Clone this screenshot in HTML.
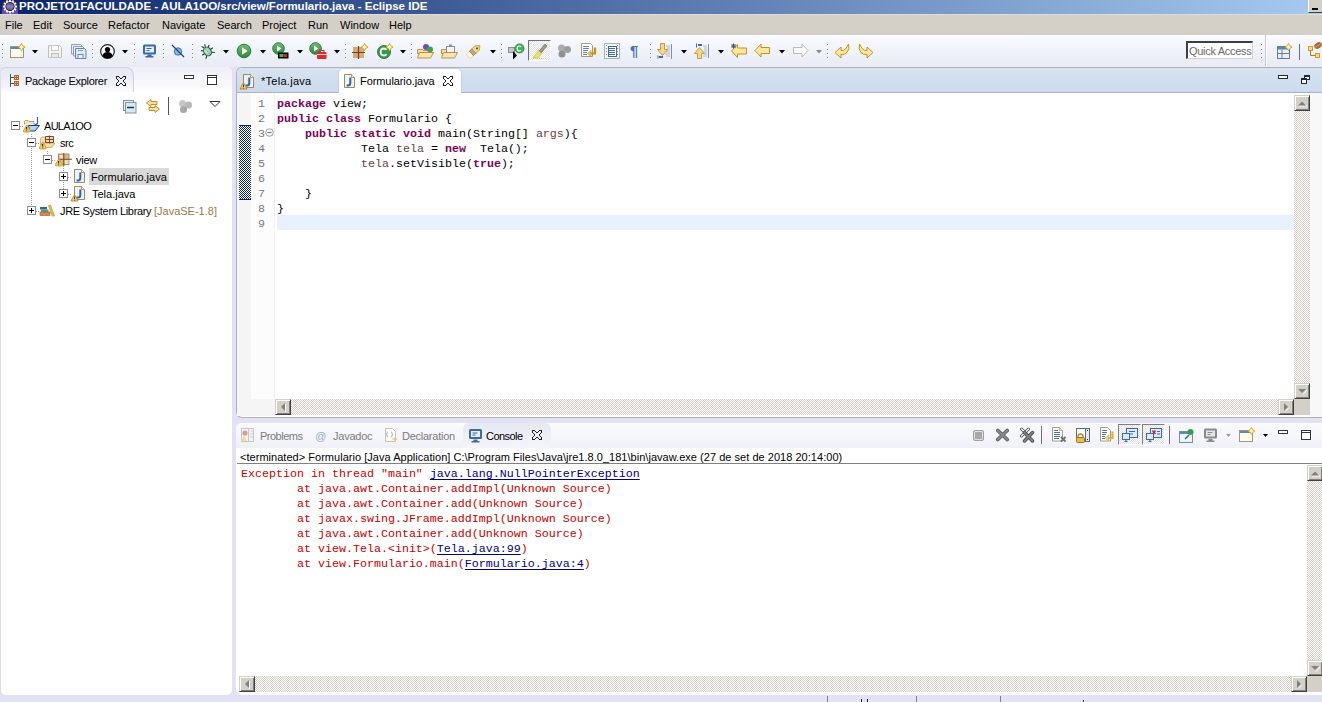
<!DOCTYPE html>
<html><head><meta charset="utf-8">
<style>
*{margin:0;padding:0;box-sizing:border-box}
html,body{width:1322px;height:702px;overflow:hidden;background:#e2e2f4;font-family:"Liberation Sans",sans-serif;font-size:11px;color:#000}
.a{position:absolute;white-space:pre}
#title{left:0;top:0;width:1322px;height:14px;background:linear-gradient(to right,#0a246a 0%,#a6caf0 100%)}
#title .t{left:19px;top:-1px;color:#fff;font-weight:bold;font-size:11.5px;line-height:15px}
#menu{left:0;top:14px;width:1322px;height:21px;background:#d4d0c8;border-top:1px solid #e0ded8}
#menu span{position:absolute;top:4px;line-height:13px}
#tb{left:0;top:35px;width:1322px;height:32px;background:linear-gradient(#fcfcff,#f0f4fa 45%,#e8eaf5)}
.mono{font-family:"Liberation Mono",monospace;font-size:12px;letter-spacing:-0.2px}
#pe{left:0;top:67px;width:232px;height:628px;background:#fff;border-radius:6px 6px 5px 5px;border-left:1px solid #dcdce6}
#pehead{left:0;top:67px;width:232px;height:25px;background:linear-gradient(#efeff8,#f8f8fc 70%,#fff);border-radius:6px 6px 0 0}
#ed{left:236px;top:67px;width:1086px;height:351px;background:#fff;border:1px solid #b0b0b8;border-right:none;border-radius:6px 0 0 6px}
#edhead{left:237px;top:68px;width:1085px;height:25px;background:linear-gradient(#d8e3f1,#ccdaec);border-bottom:1px solid #a8b4c4;border-radius:5px 0 0 0}
#con{left:236px;top:423px;width:1086px;height:272px;background:#fff;border-radius:6px 0 0 6px}
#conhead{left:236px;top:423px;width:1086px;height:25px;background:linear-gradient(#fbfbfe,#f0f0f8);border-radius:6px 0 0 0}
#status{left:0;top:695px;width:1322px;height:7px;background:#e2e2f4}
.code{font-family:"Liberation Mono",monospace;font-size:11.67px;letter-spacing:0;line-height:15px}
.kw{color:#7f0055;font-weight:bold}
.ln{color:#787878}
.red{color:#c80000}
.lnk{color:#000080;text-decoration:underline;text-underline-offset:2px}
.exp{width:9px;height:9px;border:1px solid #8c8c8c;background:#fff}
.exp:after{content:"";position:absolute;left:1px;top:3px;width:5px;height:1px;background:#000}
.plus:before{content:"";position:absolute;left:3px;top:1px;width:1px;height:5px;background:#000}
.var{color:#6a3e3e}
.chk{background-color:#fff;background-image:linear-gradient(45deg,#0a246a 25%,transparent 25%,transparent 75%,#0a246a 75%),linear-gradient(45deg,#0a246a 25%,transparent 25%,transparent 75%,#0a246a 75%);background-size:2px 2px;background-position:0 0,1px 1px}
.btn{width:16px;height:16px;background:#d4d0c8;border-top:1px solid #d4d0c8;border-left:1px solid #d4d0c8;border-right:1px solid #404040;border-bottom:1px solid #404040;box-shadow:inset 1px 1px 0 #fff,inset -1px -1px 0 #808080}
.btn svg{position:absolute;left:0;top:0}
.pressed{border-left:1px solid #808080;border-top:1px solid #808080;border-right:1px solid #fff;border-bottom:1px solid #fff;background-color:#fff;background-image:linear-gradient(45deg,#e0e0e8 25%,transparent 25%,transparent 75%,#e0e0e8 75%),linear-gradient(45deg,#e0e0e8 25%,transparent 25%,transparent 75%,#e0e0e8 75%);background-size:2px 2px;background-position:0 0,1px 1px}
.grip{width:1px;height:1px;background:#909090;box-shadow:0 5px 0 #909090,0 9px 0 #909090,0 14px 0 #909090}
.hatch{background-color:#fff;background-image:linear-gradient(45deg,#d4d0c8 25%,transparent 25%,transparent 75%,#d4d0c8 75%),linear-gradient(45deg,#d4d0c8 25%,transparent 25%,transparent 75%,#d4d0c8 75%);background-size:2px 2px;background-position:0 0,1px 1px}
</style></head><body>
<div id="title" class="a">
    <div class="a t">PROJETO1FACULDADE - AULA1OO/src/view/Formulario.java - Eclipse IDE</div>
</div>
<div id="menu" class="a">
  <span style="left:5px">File</span><span style="left:33px">Edit</span><span style="left:63px">Source</span><span style="left:108px">Refactor</span><span style="left:162px">Navigate</span><span style="left:217px">Search</span><span style="left:262px">Project</span><span style="left:308px">Run</span><span style="left:340px">Window</span><span style="left:389px">Help</span>
</div>
<div id="tb" class="a"></div>
<!--TB-->
<svg class="a" style="left:2px;top:0px" width="16" height="14" viewBox="0 0 16 14"><defs><linearGradient id="tg" x1="0" y1="0" x2="0" y2="1"><stop offset="0" stop-color="#1a1a60"/><stop offset="1" stop-color="#7050b8"/></linearGradient><linearGradient id="tc" x1="0" y1="0" x2="0" y2="1"><stop offset="0" stop-color="#5a5080"/><stop offset="0.5" stop-color="#8a80c0"/><stop offset="1" stop-color="#5a5088"/></linearGradient></defs><rect width="16" height="14" fill="url(#tg)"/><g transform="translate(0 0.5)"><circle cx="8" cy="6" r="5.6" fill="#fff"/><rect x="7.1" y="-1" width="1.8" height="3" transform="rotate(0 8 6)" fill="#fff"/><rect x="7.1" y="-1" width="1.8" height="3" transform="rotate(30 8 6)" fill="#fff"/><rect x="7.1" y="-1" width="1.8" height="3" transform="rotate(60 8 6)" fill="#fff"/><rect x="7.1" y="-1" width="1.8" height="3" transform="rotate(90 8 6)" fill="#fff"/><rect x="7.1" y="-1" width="1.8" height="3" transform="rotate(120 8 6)" fill="#fff"/><rect x="7.1" y="-1" width="1.8" height="3" transform="rotate(150 8 6)" fill="#fff"/><rect x="7.1" y="-1" width="1.8" height="3" transform="rotate(180 8 6)" fill="#fff"/><rect x="7.1" y="-1" width="1.8" height="3" transform="rotate(210 8 6)" fill="#fff"/><rect x="7.1" y="-1" width="1.8" height="3" transform="rotate(240 8 6)" fill="#fff"/><rect x="7.1" y="-1" width="1.8" height="3" transform="rotate(270 8 6)" fill="#fff"/><rect x="7.1" y="-1" width="1.8" height="3" transform="rotate(300 8 6)" fill="#fff"/><rect x="7.1" y="-1" width="1.8" height="3" transform="rotate(330 8 6)" fill="#fff"/><circle cx="8" cy="6" r="4.6" fill="#181830"/><circle cx="8" cy="6" r="3.7" fill="url(#tc)"/></g></svg>
<div class="a" style="left:1308px;top:0;width:14px;height:13px;background:#d4d0c8;border-left:1px solid #fff;border-bottom:1px solid #404040"><div class="a" style="left:3px;top:8px;width:6px;height:2px;background:#000"></div></div>
<svg class="a" style="left:2px;top:43px" width="2" height="16" viewBox="0 0 2 16" shape-rendering="crispEdges"><g fill="#8a8a8a"><rect x="0" y="1" width="1" height="1"/><rect x="0" y="6" width="1" height="1"/><rect x="0" y="10" width="1" height="1"/><rect x="0" y="14" width="1" height="1"/></g><g fill="#fff"><rect x="1" y="2" width="1" height="1"/><rect x="1" y="7" width="1" height="1"/><rect x="1" y="11" width="1" height="1"/><rect x="1" y="15" width="1" height="1"/></g></svg>
<svg class="a" style="left:9px;top:43px" width="17" height="16" viewBox="0 0 17 16" ><rect x="1.5" y="3.5" width="13" height="11" fill="#fdfaf0" stroke="#a89868"/><rect x="2" y="4" width="12" height="2" fill="#4a88c8"/><path d="M12.5 0.5l1.3 2.3 2.3 1.3-2.3 1.3-1.3 2.3-1.3-2.3L9 4.1l2.2-1.3z" fill="#fff4b0" stroke="#c89820" stroke-width="0.8"/></svg>
<svg class="a" style="left:32px;top:50px" width="6" height="4" viewBox="0 0 6 4" ><path d="M0 0h6L3 3.5z" fill="#000"/></svg>
<svg class="a" style="left:47px;top:44px" width="16" height="15" viewBox="0 0 16 15" ><path d="M1.5 1.5h11l2 2v10h-13z" fill="#f4f4f4" stroke="#c0c0c0"/><rect x="4.5" y="1.5" width="7" height="5" fill="#fafafa" stroke="#c8c8c8"/><rect x="4.5" y="9.5" width="7" height="4" fill="#e8e8e8" stroke="#c0c0c0"/></svg>
<svg class="a" style="left:71px;top:44px" width="16" height="15" viewBox="0 0 16 15" ><path d="M0.5 0.5h9l1.5 1.5v8h-10.5z" fill="#e8eef6" stroke="#8aa0c0"/><path d="M2.5 2.5h9l1.5 1.5v8h-10.5z" fill="#e8eef6" stroke="#8aa0c0"/><path d="M4.5 4.5h9l1.5 1.5v8.5h-10.5z" fill="#dfe8f4" stroke="#6a88b0"/><rect x="7" y="10.5" width="5" height="4" fill="#f0f4f8" stroke="#6a88b0"/><path d="M7 6.5h5" stroke="#8aa0c0"/></svg>
<svg class="a" style="left:92px;top:43px" width="2" height="16" viewBox="0 0 2 16" shape-rendering="crispEdges"><g fill="#8a8a8a"><rect x="0" y="1" width="1" height="1"/><rect x="0" y="6" width="1" height="1"/><rect x="0" y="10" width="1" height="1"/><rect x="0" y="14" width="1" height="1"/></g><g fill="#fff"><rect x="1" y="2" width="1" height="1"/><rect x="1" y="7" width="1" height="1"/><rect x="1" y="11" width="1" height="1"/><rect x="1" y="15" width="1" height="1"/></g></svg>
<svg class="a" style="left:100px;top:44px" width="15" height="15" viewBox="0 0 15 15" ><circle cx="7.5" cy="7.5" r="6.8" fill="#fff" stroke="#202020" stroke-width="1.2"/><circle cx="7.5" cy="5.5" r="2.6" fill="#000"/><path d="M2.3 12q1-4 5.2-4t5.2 4q-2 2.3-5.2 2.3T2.3 12z" fill="#000"/></svg>
<svg class="a" style="left:122px;top:50px" width="6" height="4" viewBox="0 0 6 4" ><path d="M0 0h6L3 3.5z" fill="#000"/></svg>
<svg class="a" style="left:134px;top:43px" width="2" height="16" viewBox="0 0 2 16" shape-rendering="crispEdges"><g fill="#8a8a8a"><rect x="0" y="1" width="1" height="1"/><rect x="0" y="6" width="1" height="1"/><rect x="0" y="10" width="1" height="1"/><rect x="0" y="14" width="1" height="1"/></g><g fill="#fff"><rect x="1" y="2" width="1" height="1"/><rect x="1" y="7" width="1" height="1"/><rect x="1" y="11" width="1" height="1"/><rect x="1" y="15" width="1" height="1"/></g></svg>
<svg class="a" style="left:142px;top:44px" width="15" height="14" viewBox="0 0 15 14" ><rect x="1" y="0.5" width="13" height="10" rx="1.5" fill="#3a6aa8"/><rect x="3" y="2.5" width="9" height="6" fill="#e4eef8"/><path d="M4.5 4.5h5M4.5 6.5h3" stroke="#3a6aa8"/><path d="M5.5 10.5h4v1.5h2v1.5h-8V12h2z" fill="#3a6aa8"/></svg>
<svg class="a" style="left:163px;top:43px" width="2" height="16" viewBox="0 0 2 16" shape-rendering="crispEdges"><g fill="#8a8a8a"><rect x="0" y="1" width="1" height="1"/><rect x="0" y="6" width="1" height="1"/><rect x="0" y="10" width="1" height="1"/><rect x="0" y="14" width="1" height="1"/></g><g fill="#fff"><rect x="1" y="2" width="1" height="1"/><rect x="1" y="7" width="1" height="1"/><rect x="1" y="11" width="1" height="1"/><rect x="1" y="15" width="1" height="1"/></g></svg>
<svg class="a" style="left:171px;top:44px" width="14" height="14" viewBox="0 0 14 14" ><circle cx="7" cy="7.5" r="3.7" fill="#8ab8e0" stroke="#3a70a8" stroke-width="1"/><path d="M1 1l12 12" stroke="#1a4880" stroke-width="1.2"/></svg>
<svg class="a" style="left:192px;top:43px" width="2" height="16" viewBox="0 0 2 16" shape-rendering="crispEdges"><g fill="#8a8a8a"><rect x="0" y="1" width="1" height="1"/><rect x="0" y="6" width="1" height="1"/><rect x="0" y="10" width="1" height="1"/><rect x="0" y="14" width="1" height="1"/></g><g fill="#fff"><rect x="1" y="2" width="1" height="1"/><rect x="1" y="7" width="1" height="1"/><rect x="1" y="11" width="1" height="1"/><rect x="1" y="15" width="1" height="1"/></g></svg>
<svg class="a" style="left:199px;top:43px" width="17" height="16" viewBox="0 0 17 16"><defs><radialGradient id="bg1" cx="0.4" cy="0.4" r="0.7"><stop offset="0" stop-color="#e0f0c8"/><stop offset="1" stop-color="#70b890"/></radialGradient></defs><g transform="rotate(-35 8.5 8.5)"><path d="M3.5 4l2.5 2M13.5 4l-2.5 2M2 8.5h3.5M15 8.5h-3.5M3 13.5l2.5-2M14 13.5l-2.5-2M6.5 1l1.3 2.5M10.5 1L9.2 3.5" stroke="#283830" stroke-width="1.1"/><ellipse cx="8.5" cy="8.5" rx="3.6" ry="4.6" fill="url(#bg1)" stroke="#2a6a60" stroke-width="1.1"/><path d="M8.5 5v7" stroke="#90b870" stroke-width="0.8"/></g></svg>
<svg class="a" style="left:223px;top:50px" width="6" height="4" viewBox="0 0 6 4" ><path d="M0 0h6L3 3.5z" fill="#000"/></svg>
<svg class="a" style="left:236px;top:43px" width="16" height="16" viewBox="0 0 16 16"><defs><linearGradient id="rg1" x1="0" y1="0" x2="0" y2="1"><stop offset="0" stop-color="#70c070"/><stop offset="1" stop-color="#2a8a3a"/></linearGradient></defs><circle cx="8" cy="8" r="6.8" fill="url(#rg1)" stroke="#207030" stroke-width="0.9"/><path d="M6 4.3v7.4l5.6-3.7z" fill="#fff"/></svg>
<svg class="a" style="left:260px;top:50px" width="6" height="4" viewBox="0 0 6 4" ><path d="M0 0h6L3 3.5z" fill="#000"/></svg>
<svg class="a" style="left:272px;top:42px" width="17" height="17" viewBox="0 0 17 17" ><circle cx="6.5" cy="6.5" r="5.8" fill="url(#rg1)" stroke="#207030" stroke-width="0.9"/><path d="M5 3.5v6l4.5-3z" fill="#fff"/><rect x="6" y="10.5" width="10.5" height="6" fill="#000"/><rect x="7.5" y="12" width="4" height="3" fill="#30c040"/><rect x="11.5" y="12" width="3.5" height="3" fill="#d02020"/></svg>
<svg class="a" style="left:297px;top:50px" width="6" height="4" viewBox="0 0 6 4" ><path d="M0 0h6L3 3.5z" fill="#000"/></svg>
<svg class="a" style="left:309px;top:42px" width="18" height="17" viewBox="0 0 18 17" ><circle cx="6.5" cy="6.5" r="5.8" fill="url(#rg1)" stroke="#207030" stroke-width="0.9"/><path d="M5 3.5v6l4.5-3z" fill="#fff"/><rect x="8" y="10" width="9.5" height="7" rx="1" fill="#e02828"/><rect x="10.5" y="8.5" width="4.5" height="2.5" fill="none" stroke="#e02828" stroke-width="1"/><path d="M8 12.5h9.5" stroke="#fff" stroke-width="0.8"/></svg>
<svg class="a" style="left:334px;top:50px" width="6" height="4" viewBox="0 0 6 4" ><path d="M0 0h6L3 3.5z" fill="#000"/></svg>
<svg class="a" style="left:345px;top:43px" width="2" height="16" viewBox="0 0 2 16" shape-rendering="crispEdges"><g fill="#8a8a8a"><rect x="0" y="1" width="1" height="1"/><rect x="0" y="6" width="1" height="1"/><rect x="0" y="10" width="1" height="1"/><rect x="0" y="14" width="1" height="1"/></g><g fill="#fff"><rect x="1" y="2" width="1" height="1"/><rect x="1" y="7" width="1" height="1"/><rect x="1" y="11" width="1" height="1"/><rect x="1" y="15" width="1" height="1"/></g></svg>
<svg class="a" style="left:352px;top:43px" width="17" height="16" viewBox="0 0 17 16" ><rect x="1" y="4" width="11" height="11" fill="#d8a878"/><path d="M6.5 3v13M0 9.5h13" stroke="#704020" stroke-width="1.2"/><path d="M12.5 0.5l1.3 2.3 2.3 1.3-2.3 1.3-1.3 2.3-1.3-2.3L9 4.1l2.2-1.3z" fill="#fff4b0" stroke="#c89820" stroke-width="0.8"/></svg>
<svg class="a" style="left:377px;top:43px" width="17" height="16" viewBox="0 0 17 16" ><circle cx="7" cy="9" r="6.5" fill="#3a9848" stroke="#206830" stroke-width="0.8"/><path d="M9.5 6.8q-1-1.3-2.5-1.3-3.3 0-3.3 3.5t3.3 3.5q1.5 0 2.5-1.3" fill="none" stroke="#fff" stroke-width="1.8"/><path d="M12.5 0.5l1.3 2.3 2.3 1.3-2.3 1.3-1.3 2.3-1.3-2.3L9 4.1l2.2-1.3z" fill="#fff4b0" stroke="#c89820" stroke-width="0.8"/></svg>
<svg class="a" style="left:400px;top:50px" width="6" height="4" viewBox="0 0 6 4" ><path d="M0 0h6L3 3.5z" fill="#000"/></svg>
<svg class="a" style="left:411px;top:43px" width="2" height="16" viewBox="0 0 2 16" shape-rendering="crispEdges"><g fill="#8a8a8a"><rect x="0" y="1" width="1" height="1"/><rect x="0" y="6" width="1" height="1"/><rect x="0" y="10" width="1" height="1"/><rect x="0" y="14" width="1" height="1"/></g><g fill="#fff"><rect x="1" y="2" width="1" height="1"/><rect x="1" y="7" width="1" height="1"/><rect x="1" y="11" width="1" height="1"/><rect x="1" y="15" width="1" height="1"/></g></svg>
<svg class="a" style="left:417px;top:43px" width="18" height="16" viewBox="0 0 18 16" ><path d="M0.5 6.5h5l1 1h6v3h-12z" fill="#f8e0a8" stroke="#b88838" stroke-width="0.9"/><path d="M2.5 9.5h14l-3 5.5h-13z" fill="#fae4b0" stroke="#b88838" stroke-width="0.9"/><circle cx="9" cy="4" r="3" fill="#6a50b0"/><circle cx="13" cy="6.5" r="3" fill="#40a050"/></svg>
<svg class="a" style="left:441px;top:43px" width="17" height="16" viewBox="0 0 17 16" ><path d="M0.5 6.5h5l1 1h6v3h-12z" fill="#f8e0a8" stroke="#b88838" stroke-width="0.9"/><rect x="5.5" y="3.5" width="8" height="6" fill="#f4f4f8" stroke="#8a8aa0"/><rect x="8" y="1.5" width="3" height="2" fill="#8a8aa0"/><path d="M2.5 9.5h14l-3 5.5h-13z" fill="#fae4b0" stroke="#b88838" stroke-width="0.9"/></svg>
<svg class="a" style="left:465px;top:42px" width="18" height="18" viewBox="0 0 18 18"><g transform="rotate(-42 9 9)"><path d="M1 6.5q0-0.5 1-0.5h3.5v6H2q-1 0-1-0.5z" fill="#fff8d0" stroke="#e8c878" stroke-width="0.6"/><rect x="5.5" y="6" width="3.5" height="6" fill="#b0a8a0" stroke="#807050" stroke-width="0.6"/><path d="M9 6h4.5l3.5 3-3.5 3H9z" fill="#f4d888" stroke="#c89838" stroke-width="0.8"/><circle cx="13" cy="9" r="0.9" fill="#303020"/></g></svg>
<svg class="a" style="left:490px;top:50px" width="6" height="4" viewBox="0 0 6 4" ><path d="M0 0h6L3 3.5z" fill="#000"/></svg>
<svg class="a" style="left:501px;top:43px" width="2" height="16" viewBox="0 0 2 16" shape-rendering="crispEdges"><g fill="#8a8a8a"><rect x="0" y="1" width="1" height="1"/><rect x="0" y="6" width="1" height="1"/><rect x="0" y="10" width="1" height="1"/><rect x="0" y="14" width="1" height="1"/></g><g fill="#fff"><rect x="1" y="2" width="1" height="1"/><rect x="1" y="7" width="1" height="1"/><rect x="1" y="11" width="1" height="1"/><rect x="1" y="15" width="1" height="1"/></g></svg>
<svg class="a" style="left:508px;top:43px" width="17" height="17" viewBox="0 0 17 17" ><rect x="0.5" y="4.5" width="6" height="5" fill="#c8c8d0" stroke="#8a8aa0"/><path d="M5 8v8.5l4-4z" fill="#000"/><circle cx="11.5" cy="5.5" r="5" fill="#3a9848"/><circle cx="11.5" cy="5.5" r="4" fill="#48b058"/><path d="M13 4q-.6-1-1.6-1-2.2 0-2.2 2.5t2.2 2.5q1 0 1.6-1" fill="none" stroke="#fff" stroke-width="1.2"/></svg>
<div class="a pressed" style="left:528px;top:40px;width:23px;height:21px;border-color:#707070 #fff #fff #707070"></div>
<svg class="a" style="left:532px;top:43px" width="16" height="16" viewBox="0 0 16 16" ><path d="M13 1l2 2-6 7-2-2z" fill="#a09880" stroke="#706850" stroke-width="0.6"/><path d="M6.5 7.5l3 3-4 4.5H1z" fill="#f0e060" stroke="#c0b030" stroke-width="0.6"/><path d="M1 15.5h14" stroke="#d8c840" stroke-dasharray="1 1"/></svg>
<svg class="a" style="left:557px;top:43px" width="15" height="15" viewBox="0 0 15 15" opacity="0.85"><circle cx="4.5" cy="5" r="3.5" fill="#a0a0a0"/><circle cx="10.5" cy="6.5" r="3.5" fill="#909090"/><circle cx="5" cy="11" r="3.5" fill="#808080"/></svg>
<svg class="a" style="left:581px;top:43px" width="16" height="15" viewBox="0 0 16 15"><path d="M0.5 0.5h9l2 2v11h-11z" fill="#fffef8" stroke="#a89868"/><path d="M2 3.5h6M2 5.5h6M2 7.5h5M2 9.5h4M2 11.5h4" stroke="#5a80c0"/><path d="M14 4.5v6h-5" fill="none" stroke="#c89020" stroke-width="2.2"/><path d="M10 7.5l-3.5 3 3.5 3z" fill="#f0c050" stroke="#c89020" stroke-width="0.6"/></svg>
<svg class="a" style="left:604px;top:43px" width="16" height="16" viewBox="0 0 16 16" shape-rendering="crispEdges"><rect x="0" y="0" width="16" height="16" fill="#f2f4f6"/><path d="M0 0h16v16H0z" fill="none" stroke="#a8b0b8" stroke-width="2"/><g fill="#6a90c0"><rect x="2" y="2" width="1" height="1"/><rect x="2" y="5" width="1" height="1"/><rect x="2" y="8" width="1" height="1"/><rect x="2" y="11" width="1" height="1"/><rect x="13" y="2" width="1" height="1"/><rect x="13" y="5" width="1" height="1"/><rect x="13" y="8" width="1" height="1"/><rect x="13" y="11" width="1" height="1"/></g><rect x="4" y="3" width="8" height="10" fill="#fff"/><path d="M4 3h8v10H4z" fill="none" stroke="#3a6aa8" stroke-width="1"/><g fill="#3a6aa8"><rect x="5" y="5" width="6" height="1"/><rect x="5" y="7" width="6" height="1"/><rect x="5" y="9" width="6" height="1"/><rect x="5" y="11" width="6" height="1"/></g></svg>
<div class="a" style="left:630px;top:43px;font-size:15px;line-height:16px;font-weight:bold;color:#4a70b0">¶</div>
<svg class="a" style="left:650px;top:43px" width="2" height="16" viewBox="0 0 2 16" shape-rendering="crispEdges"><g fill="#8a8a8a"><rect x="0" y="1" width="1" height="1"/><rect x="0" y="6" width="1" height="1"/><rect x="0" y="10" width="1" height="1"/><rect x="0" y="14" width="1" height="1"/></g><g fill="#fff"><rect x="1" y="2" width="1" height="1"/><rect x="1" y="7" width="1" height="1"/><rect x="1" y="11" width="1" height="1"/><rect x="1" y="15" width="1" height="1"/></g></svg>
<svg class="a" style="left:657px;top:43px" width="17" height="16" viewBox="0 0 17 16" ><path d="M3.5 0.5h4v6h3l-5 6-5-6h3z" fill="#f8d890" stroke="#c89020" stroke-width="0.9"/><path d="M9 3h4M10 5h3M10 7h3M9 9h4M8 11h5M9 13h4" stroke="#a8b8c8"/><path d="M14.5 1v15" stroke="#7890a8"/><rect x="2" y="13" width="4" height="2" fill="#3a6aa8"/><path d="M1 12.5v3" stroke="#3a6aa8"/></svg>
<svg class="a" style="left:681px;top:50px" width="6" height="4" viewBox="0 0 6 4" ><path d="M0 0h6L3 3.5z" fill="#000"/></svg>
<svg class="a" style="left:694px;top:43px" width="17" height="16" viewBox="0 0 17 16" ><path d="M5.5 4.5l5 6h-3v5h-4v-5h-3z" fill="#f8d890" stroke="#c89020" stroke-width="0.9"/><path d="M9 3h4M10 5h3M10 7h3M9 9h4M10 11h3M9 13h4" stroke="#a8b8c8"/><path d="M14.5 1v14" stroke="#7890a8"/><rect x="4" y="1" width="4" height="2" fill="#3a6aa8"/><path d="M2.5 0.5v4" stroke="#3a6aa8"/></svg>
<svg class="a" style="left:718px;top:50px" width="6" height="4" viewBox="0 0 6 4" ><path d="M0 0h6L3 3.5z" fill="#000"/></svg>
<svg class="a" style="left:730px;top:43px" width="18" height="15" viewBox="0 0 18 15" ><path d="M1.5 8l6-6.5v3.5h9v6h-9v3.5z" fill="#fde8a0" stroke="#c89020" stroke-width="1" stroke-linejoin="round"/><path d="M3.5 0.5v5M1 3h5M1.5 1l4 4M5.5 1l-4 4" stroke="#304870" stroke-width="0.9"/></svg>
<svg class="a" style="left:754px;top:43px" width="17" height="15" viewBox="0 0 17 15" ><path d="M1 7.5l6-6.5v3.5h8.5v6h-8.5v3.5z" fill="#fde8a0" stroke="#c89020" stroke-width="1" stroke-linejoin="round"/></svg>
<svg class="a" style="left:779px;top:50px" width="6" height="4" viewBox="0 0 6 4" ><path d="M0 0h6L3 3.5z" fill="#000"/></svg>
<svg class="a" style="left:792px;top:43px" width="17" height="15" viewBox="0 0 17 15" ><path d="M16 7.5l-6-6.5v3.5H1.5v6H10v3.5z" fill="#fafafa" stroke="#b8b8b8" stroke-width="1" stroke-linejoin="round"/></svg>
<svg class="a" style="left:816px;top:50px" width="6" height="4" viewBox="0 0 6 4" ><path d="M0 0h6L3 3.5z" fill="#888"/></svg>
<svg class="a" style="left:827px;top:43px" width="2" height="16" viewBox="0 0 2 16" shape-rendering="crispEdges"><g fill="#8a8a8a"><rect x="0" y="1" width="1" height="1"/><rect x="0" y="6" width="1" height="1"/><rect x="0" y="10" width="1" height="1"/><rect x="0" y="14" width="1" height="1"/></g><g fill="#fff"><rect x="1" y="2" width="1" height="1"/><rect x="1" y="7" width="1" height="1"/><rect x="1" y="11" width="1" height="1"/><rect x="1" y="15" width="1" height="1"/></g></svg>
<svg class="a" style="left:834px;top:43px" width="17" height="16" viewBox="0 0 17 16" ><path d="M14.5 1q1.5 5-1.5 8.5-2.5 2.5-6 2v3.5L1 9.5 7 4v3.5q3 .5 4.5-1.5t3-5z" fill="#fde8a0" stroke="#c89020" stroke-width="1" stroke-linejoin="round"/></svg>
<svg class="a" style="left:857px;top:43px" width="17" height="16" viewBox="0 0 17 16" ><path d="M2.5 1q-1.5 5 1.5 8.5 2.5 2.5 6 2v3.5l6-5.5L10 4v3.5q-3 .5-4.5-1.5t-3-5z" fill="#fde8a0" stroke="#c89020" stroke-width="1" stroke-linejoin="round"/></svg>
<div class="a" style="left:1186px;top:41px;width:67px;height:18px;background:#fff;border-top:2px solid #404040;border-left:2px solid #404040;border-right:1px solid #d4d0c8;border-bottom:1px solid #d4d0c8"></div>
<div class="a" style="left:1189px;top:45px;line-height:13px;color:#6a6a6a;font-size:11px;letter-spacing:-0.3px">Quick Access</div>
<svg class="a" style="left:1261px;top:43px" width="2" height="16" viewBox="0 0 2 16" shape-rendering="crispEdges"><g fill="#8a8a8a"><rect x="0" y="1" width="1" height="1"/><rect x="0" y="6" width="1" height="1"/><rect x="0" y="10" width="1" height="1"/><rect x="0" y="14" width="1" height="1"/></g><g fill="#fff"><rect x="1" y="2" width="1" height="1"/><rect x="1" y="7" width="1" height="1"/><rect x="1" y="11" width="1" height="1"/><rect x="1" y="15" width="1" height="1"/></g></svg>
<div class="a" style="left:1265px;top:35px;width:2px;height:31px;border-left:1px solid #c8c8d4;border-right:1px solid #fff"></div>
<svg class="a" style="left:1276px;top:43px" width="17" height="16" viewBox="0 0 17 16" ><rect x="1.5" y="3.5" width="12" height="12" fill="#e8f0f8" stroke="#6a7890"/><rect x="2" y="4" width="11" height="2.5" fill="#4a88c8"/><path d="M6 6.5v9M2 10.5h11" stroke="#6a7890"/><path d="M12.5 0.5l1.3 2.3 2.3 1.3-2.3 1.3-1.3 2.3-1.3-2.3L9 4.1l2.2-1.3z" fill="#fff4b0" stroke="#c89820" stroke-width="0.8"/></svg>
<div class="a" style="left:1299px;top:44px;width:1px;height:16px;background:#6a6a80"></div>
<svg class="a" style="left:1308px;top:42px" width="14" height="17" viewBox="0 0 14 17" ><rect x="0.5" y="4.5" width="4" height="4" fill="#f8e080" stroke="#c8a020"/><rect x="7.5" y="11.5" width="4" height="4" fill="#f8e080" stroke="#c8a020"/><path d="M2.5 8.5v5h5" fill="none" stroke="#a08030"/><ellipse cx="10" cy="3.5" rx="4" ry="3" fill="#a86838" transform="rotate(-30 10 3.5)"/><path d="M7.5 5l5-3" stroke="#e8c090" stroke-width="0.8"/></svg>
<!--/TB-->

<div id="pe" class="a"></div>
<div id="pehead" class="a"></div>
<div class="a" style="left:0px;top:67px;width:134px;height:25px;background:linear-gradient(#e4e6f2,#f4f5fa 80%,#fafafd);border-radius:6px 8px 0 0;border:1px solid #d0d2e0;border-bottom:none;border-left-color:#dcdee8"></div>
<svg class="a" style="left:10px;top:74px" width="10" height="13" viewBox="0 0 10 13" shape-rendering="crispEdges"><rect x="0" y="0" width="1" height="13" fill="#4a5260"/><rect x="1" y="3" width="3" height="1" fill="#4a5260"/><rect x="1" y="9" width="3" height="1" fill="#4a5260"/><rect x="4" y="1" width="5" height="5" fill="#a86a30"/><rect x="4" y="7" width="5" height="5" fill="#a86a30"/><g fill="#f4c890"><rect x="5" y="2" width="1" height="1"/><rect x="7" y="2" width="1" height="1"/><rect x="5" y="4" width="1" height="1"/><rect x="7" y="4" width="1" height="1"/><rect x="5" y="8" width="1" height="1"/><rect x="7" y="8" width="1" height="1"/><rect x="5" y="10" width="1" height="1"/><rect x="7" y="10" width="1" height="1"/></g></svg>
<div class="a" style="left:25px;top:75px;line-height:13px;letter-spacing:-0.3px">Package Explorer</div>
<svg class="a" style="left:116px;top:76px" width="10" height="10" viewBox="0 0 10 10"><g fill="#202020"><rect x="0" y="0" width="1" height="1"/><rect x="1" y="0" width="1" height="1"/><rect x="2" y="0" width="1" height="1"/><rect x="7" y="0" width="1" height="1"/><rect x="8" y="0" width="1" height="1"/><rect x="9" y="0" width="1" height="1"/><rect x="0" y="1" width="1" height="1"/><rect x="3" y="1" width="1" height="1"/><rect x="6" y="1" width="1" height="1"/><rect x="9" y="1" width="1" height="1"/><rect x="0" y="2" width="1" height="1"/><rect x="4" y="2" width="1" height="1"/><rect x="5" y="2" width="1" height="1"/><rect x="9" y="2" width="1" height="1"/><rect x="1" y="3" width="1" height="1"/><rect x="8" y="3" width="1" height="1"/><rect x="2" y="4" width="1" height="1"/><rect x="7" y="4" width="1" height="1"/><rect x="2" y="5" width="1" height="1"/><rect x="7" y="5" width="1" height="1"/><rect x="1" y="6" width="1" height="1"/><rect x="8" y="6" width="1" height="1"/><rect x="0" y="7" width="1" height="1"/><rect x="4" y="7" width="1" height="1"/><rect x="5" y="7" width="1" height="1"/><rect x="9" y="7" width="1" height="1"/><rect x="0" y="8" width="1" height="1"/><rect x="3" y="8" width="1" height="1"/><rect x="6" y="8" width="1" height="1"/><rect x="9" y="8" width="1" height="1"/><rect x="0" y="9" width="1" height="1"/><rect x="1" y="9" width="1" height="1"/><rect x="2" y="9" width="1" height="1"/><rect x="7" y="9" width="1" height="1"/><rect x="8" y="9" width="1" height="1"/><rect x="9" y="9" width="1" height="1"/></g></svg>
<div class="a" style="left:184px;top:75px;width:10px;height:4px;border:1px solid #333;background:#fff"></div>
<div class="a" style="left:207px;top:75px;width:10px;height:10px;border:1px solid #333;background:#fff;box-shadow:inset 0 1px 0 #fff,inset 0 2px 0 #333"></div>
<!-- view toolbar -->
<svg class="a" style="left:122px;top:99px" width="15" height="15" viewBox="0 0 15 15"><rect x="1.5" y="1.5" width="10" height="10" fill="#e4eef6" stroke="#8a9098"/><rect x="3.5" y="3.5" width="10.5" height="10.5" fill="#d4eaf8" stroke="#8a9098"/><path d="M5 8.5h7" stroke="#1a3858" stroke-width="1.5"/></svg>
<svg class="a" style="left:145px;top:98px" width="16" height="16" viewBox="0 0 16 16"><path d="M6 1.5L1.5 5 6 8.5V6.5h6V3.5H6z" fill="#f8e0a0" stroke="#c89020" stroke-linejoin="round"/><path d="M10 7.5L14.5 11 10 14.5v-2H4v-3h6z" fill="#f8e0a0" stroke="#c89020" stroke-linejoin="round"/></svg>
<div class="a" style="left:168px;top:97px;width:1px;height:18px;background:#555"></div>
<svg class="a" style="left:178px;top:99px" width="15" height="15" viewBox="0 0 15 15"><circle cx="4.5" cy="4.5" r="3.5" fill="#c8c8c8"/><circle cx="10.5" cy="6" r="3.5" fill="#b8b8b8"/><circle cx="5.5" cy="10.5" r="3.5" fill="#a8a8a8"/></svg>
<svg class="a" style="left:209px;top:100px" width="12" height="8" viewBox="0 0 12 8"><path d="M1 1.5h10L6 6.5z" fill="#fff" stroke="#333"/></svg>
<!-- tree -->
<div class="a" style="left:31px;top:134px;width:1px;height:77px;border-left:1px dotted #999"></div>
<div class="a" style="left:47px;top:151px;width:1px;height:3px;border-left:1px dotted #999"></div>
<div class="a" style="left:63px;top:166px;width:1px;height:27px;border-left:1px dotted #999"></div>
<div class="a" style="left:20px;top:126px;width:3px;border-top:1px dotted #999"></div>
<div class="a" style="left:36px;top:143px;width:3px;border-top:1px dotted #999"></div>
<div class="a" style="left:52px;top:160px;width:3px;border-top:1px dotted #999"></div>
<div class="a" style="left:68px;top:177px;width:3px;border-top:1px dotted #999"></div>
<div class="a" style="left:68px;top:194px;width:3px;border-top:1px dotted #999"></div>
<div class="a" style="left:36px;top:211px;width:3px;border-top:1px dotted #999"></div>
<div class="a exp" style="left:11px;top:121px"></div>
<div class="a exp" style="left:27px;top:138px"></div>
<div class="a exp" style="left:43px;top:155px"></div>
<div class="a exp plus" style="left:59px;top:172px"></div>
<div class="a exp plus" style="left:59px;top:189px"></div>
<div class="a exp plus" style="left:27px;top:206px"></div>
<!-- project icon -->
<svg class="a" style="left:23px;top:116px" width="17" height="17" viewBox="0 0 17 17"><path d="M1.5 8.5V5.5l1-1h2.5l1 1h5v3" fill="#f4e2b8" stroke="#a89870" stroke-width="0.9"/><path d="M14.5 1v5.5q0 2-2 2h-1" fill="none" stroke="#3a6098" stroke-width="1.2"/><path d="M5.5 9.5h11l-4.5 5.5H6.5z" fill="#a8daf8" stroke="#20388a" stroke-width="1"/><path d="M3.5 9.2Q4 9 4.5 9.6L7.3 15Q7.3 16 6.5 16H1Q0 16 0.2 15z" fill="#f2c858" stroke="#c89838" stroke-width="0.8"/><path d="M3.6 11v2.6M3.6 14.4v0.9" stroke="#3a2800" stroke-width="1.1"/></svg>
<div class="a" style="left:44px;top:120px;line-height:13px;letter-spacing:-0.71px">AULA1OO</div>
<!-- src icon -->
<svg class="a" style="left:39px;top:133px" width="17" height="17" viewBox="0 0 17 17"><path d="M1.5 12V5.5l1-1.5h3l1 1.5h1v5" fill="#f4deb0" stroke="#c8a870" stroke-width="0.8"/><path d="M3 10h13l-3.5 4.5H1.5z" fill="#f8dca0" stroke="#c8a060" stroke-width="0.8"/><rect x="6.5" y="3.5" width="8" height="6" fill="#f0d8c0"/><path d="M10.5 2.5v8M6 6.5h9M6.5 3.5h8v6h-8z" stroke="#7a4a28" stroke-width="1" fill="none"/><path d="M3.5 9.2Q4 9 4.5 9.6L7.3 15Q7.3 16 6.5 16H1Q0 16 0.2 15z" fill="#f2c858" stroke="#c89838" stroke-width="0.8"/><path d="M3.6 11v2.6M3.6 14.4v0.9" stroke="#3a2800" stroke-width="1.1"/></svg>
<div class="a" style="left:60px;top:137px;line-height:13px;letter-spacing:-0.4px">src</div>
<!-- package icon -->
<svg class="a" style="left:55px;top:150px" width="17" height="17" viewBox="0 0 17 17"><rect x="3.5" y="4" width="10.5" height="10.5" fill="#d8b890" stroke="#a07850" stroke-width="0.8"/><rect x="4.5" y="5" width="3.5" height="4" fill="#f0dcc0"/><rect x="9.5" y="10" width="4" height="4" fill="#e8e0b8"/><path d="M8.8 3v13M3 9.2h14" stroke="#7a4a28" stroke-width="1.1"/><path d="M3.5 9.2Q4 9 4.5 9.6L7.3 15Q7.3 16 6.5 16H1Q0 16 0.2 15z" fill="#f2c858" stroke="#c89838" stroke-width="0.8"/><path d="M3.6 11v2.6M3.6 14.4v0.9" stroke="#3a2800" stroke-width="1.1"/></svg>
<div class="a" style="left:76px;top:154px;line-height:13px;letter-spacing:-0.25px">view</div>
<!-- java file -->
<div class="a" style="left:89px;top:168px;width:80px;height:17px;background:#d9d9d9"></div>
<svg class="a" style="left:72px;top:168px" width="15" height="16" viewBox="0 0 15 16"><path d="M2.5 1.5h7l3 3v10h-10z" fill="#eaf4fc" stroke="#a08858"/><path d="M9.5 1.5v3h3" fill="#f4ecd0" stroke="#a08858" stroke-width="0.8"/><path d="M8.3 4.5v5.5q0 2.5-2.3 2.5H4.6" fill="none" stroke="#3a6098" stroke-width="2"/></svg>
<div class="a" style="left:91px;top:171px;line-height:13px">Formulario.java</div>
<svg class="a" style="left:70px;top:185px" width="17" height="17" viewBox="0 0 17 17"><path d="M4.5 1.5h7l3 3v10h-10z" fill="#eaf4fc" stroke="#a08858"/><path d="M11.5 1.5v3h3" fill="#f4ecd0" stroke="#a08858" stroke-width="0.8"/><path d="M10.3 4.5v5.5q0 2.5-2.3 2.5H6.6" fill="none" stroke="#3a6098" stroke-width="2"/><path d="M4.5 9.5L8 16H1z" fill="#f8d070" stroke="#b07810" stroke-width="0.8"/><path d="M4.5 11.5v2.5M4.5 14.7v0.8" stroke="#402000" stroke-width="0.9"/></svg>
<div class="a" style="left:92px;top:188px;line-height:13px">Tela.java</div>
<!-- JRE -->
<svg class="a" style="left:39px;top:203px" width="17" height="16" viewBox="0 0 17 16"><rect x="1" y="4" width="7" height="2.5" fill="#2a6e90"/><rect x="2" y="6.5" width="7.5" height="2.5" fill="#4aa080"/><rect x="1" y="9" width="10" height="3.5" fill="#d88850" stroke="#a05828" stroke-width="0.6"/><path d="M9.5 2.5l2-0.5 4 11h-2.3z" fill="#e8b850" stroke="#c89030" stroke-width="0.7"/></svg>
<div class="a" style="left:60px;top:205px;line-height:13px"><span style="letter-spacing:-0.33px">JRE System Library </span><span style="color:#957d47">[JavaSE-1.8]</span></div>

<div id="ed" class="a"></div>
<div id="edhead" class="a"></div>
<div class="a" style="left:338px;top:68px;width:124px;height:25px;background:#fff;border-radius:5px 5px 0 0;border:1px solid #c4d0e0;border-bottom:none"></div>
<svg class="a" style="left:239px;top:73px" width="17" height="17" viewBox="0 0 17 17"><path d="M4.5 1.5h7l3 3v10h-10z" fill="#eaf4fc" stroke="#a08858"/><path d="M11.5 1.5v3h3" fill="#f4ecd0" stroke="#a08858" stroke-width="0.8"/><path d="M10.3 4.5v5.5q0 2.5-2.3 2.5H6.6" fill="none" stroke="#3a6098" stroke-width="2"/><path d="M4.5 9.5L8 16H1z" fill="#f8d070" stroke="#b07810" stroke-width="0.8"/><path d="M4.5 11.5v2.5M4.5 14.7v0.8" stroke="#402000" stroke-width="0.9"/></svg>
<div class="a" style="left:261px;top:75px;line-height:13px;letter-spacing:0.28px">*Tela.java</div>
<svg class="a" style="left:342px;top:73px" width="15" height="16" viewBox="0 0 15 16"><path d="M2.5 1.5h7l3 3v10h-10z" fill="#eaf4fc" stroke="#a08858"/><path d="M9.5 1.5v3h3" fill="#f4ecd0" stroke="#a08858" stroke-width="0.8"/><path d="M8.3 4.5v5.5q0 2.5-2.3 2.5H4.6" fill="none" stroke="#3a6098" stroke-width="2"/></svg>
<div class="a" style="left:360px;top:75px;line-height:13px;letter-spacing:-0.08px">Formulario.java</div>
<svg class="a" style="left:443px;top:76px" width="10" height="10" viewBox="0 0 10 10"><g fill="#202020"><rect x="0" y="0" width="1" height="1"/><rect x="1" y="0" width="1" height="1"/><rect x="2" y="0" width="1" height="1"/><rect x="7" y="0" width="1" height="1"/><rect x="8" y="0" width="1" height="1"/><rect x="9" y="0" width="1" height="1"/><rect x="0" y="1" width="1" height="1"/><rect x="3" y="1" width="1" height="1"/><rect x="6" y="1" width="1" height="1"/><rect x="9" y="1" width="1" height="1"/><rect x="0" y="2" width="1" height="1"/><rect x="4" y="2" width="1" height="1"/><rect x="5" y="2" width="1" height="1"/><rect x="9" y="2" width="1" height="1"/><rect x="1" y="3" width="1" height="1"/><rect x="8" y="3" width="1" height="1"/><rect x="2" y="4" width="1" height="1"/><rect x="7" y="4" width="1" height="1"/><rect x="2" y="5" width="1" height="1"/><rect x="7" y="5" width="1" height="1"/><rect x="1" y="6" width="1" height="1"/><rect x="8" y="6" width="1" height="1"/><rect x="0" y="7" width="1" height="1"/><rect x="4" y="7" width="1" height="1"/><rect x="5" y="7" width="1" height="1"/><rect x="9" y="7" width="1" height="1"/><rect x="0" y="8" width="1" height="1"/><rect x="3" y="8" width="1" height="1"/><rect x="6" y="8" width="1" height="1"/><rect x="9" y="8" width="1" height="1"/><rect x="0" y="9" width="1" height="1"/><rect x="1" y="9" width="1" height="1"/><rect x="2" y="9" width="1" height="1"/><rect x="7" y="9" width="1" height="1"/><rect x="8" y="9" width="1" height="1"/><rect x="9" y="9" width="1" height="1"/></g></svg>
<div class="a" style="left:1278px;top:75px;width:10px;height:4px;border:1px solid #1a2838;background:#fff"></div>
<svg class="a" style="left:1301px;top:75px" width="9" height="9" viewBox="0 0 9 9" shape-rendering="crispEdges"><path d="M3 0h6v5H3z" fill="#1a2838"/><path d="M4 2h4v2H4z" fill="#fff"/><path d="M0 3h6v6H0z" fill="#1a2838"/><path d="M1 5h4v3H1z" fill="#fff"/></svg>
<!-- rulers -->
<div class="a" style="left:237px;top:93px;width:14px;height:306px;background:#f5f5f5"></div>
<div class="a" style="left:251px;top:93px;width:24px;height:306px;background:#fcfcfc;border-right:1px solid #f0f0f0"></div>
<div class="a chk" style="left:239px;top:125px;width:12px;height:75px;border-top:1px solid #0a246a;border-bottom:1px solid #0a246a"></div>
<div class="a code ln" style="left:258px;top:97px;letter-spacing:0">1
2
3
4
5
6
7
8
9</div>
<svg class="a" style="left:265px;top:128px" width="9" height="9" viewBox="0 0 9 9"><circle cx="4.5" cy="4.5" r="3.8" fill="#f4f4f4" stroke="#a0a0a0"/><path d="M2.5 4.5h4" stroke="#707070"/></svg>
<div class="a" style="left:277px;top:215px;width:1017px;height:15px;background:#e8f2fe"></div>
<div class="a code" style="left:277px;top:97px"><span class="kw">package</span> view;
<span class="kw">public</span> <span class="kw">class</span> Formulario {
    <span class="kw">public</span> <span class="kw">static</span> <span class="kw">void</span> main(String[] <span class="var">args</span>){
            Tela <span class="var">tela</span> = <span class="kw">new</span>  Tela();
            <span class="var">tela</span>.setVisible(<span class="kw">true</span>);

    }
}</div>
<!-- scrollbars -->
<div class="a" style="left:1310px;top:93px;width:12px;height:324px;background:#f8f8f8"></div>
<div class="a hatch" style="left:1294px;top:111px;width:16px;height:272px"></div>
<div class="a btn" style="left:1294px;top:95px"><svg width="14" height="14" viewBox="0 0 14 14"><path d="M4 10h8" stroke="#fff"/><path d="M3 9.5h8L7 5.5z" fill="#808080"/></svg></div>
<div class="a btn" style="left:1294px;top:383px"><svg width="14" height="14" viewBox="0 0 14 14"><path d="M8 10.5l4-4.5" stroke="#fff"/><path d="M3 5h8L7 9z" fill="#808080"/></svg></div>
<div class="a" style="left:237px;top:399px;width:38px;height:17px;background:#f5f5f5"></div>
<div class="a hatch" style="left:291px;top:399px;width:987px;height:16px"></div>
<div class="a btn" style="left:275px;top:399px"><svg width="14" height="14" viewBox="0 0 14 14"><path d="M9.5 4v8" stroke="#fff"/><path d="M9 3v8L5 7z" fill="#808080"/></svg></div>
<div class="a btn" style="left:1278px;top:399px"><svg width="14" height="14" viewBox="0 0 14 14"><path d="M6 11.5l4-4" stroke="#fff"/><path d="M5 3v8L9 7z" fill="#808080"/></svg></div>
<div class="a" style="left:1294px;top:399px;width:16px;height:16px;background:#d4d0c8"></div>

<div id="con" class="a"></div>
<div id="conhead" class="a"></div>
<div class="a" style="left:463px;top:423px;width:88px;height:25px;background:linear-gradient(#e6e8f2,#f4f5fa);border-radius:6px 6px 0 0"></div>
<!-- problems icon -->
<svg class="a" style="left:240px;top:427px" width="16" height="16" viewBox="0 0 16 16" opacity="0.55"><rect x="1.5" y="1.5" width="12" height="13" fill="#f4f4f4" stroke="#a0a0a0"/><path d="M8.5 1.5v13" stroke="#a0a0a0"/><circle cx="5" cy="6" r="2.6" fill="#e04040"/><path d="M4 8.5L7 14H1z" fill="#f0d040"/><path d="M10 4h3M10 7h3M10 10h3" stroke="#a0b0c0"/></svg>
<div class="a" style="left:260px;top:430px;line-height:13px;color:#7c7c7c;letter-spacing:-0.5px">Problems</div>
<div class="a" style="left:315px;top:430px;line-height:13px;color:#8cb0d4;font-size:11px;font-style:italic">@</div>
<div class="a" style="left:333px;top:430px;line-height:13px;color:#7c7c7c;letter-spacing:-0.24px">Javadoc</div>
<svg class="a" style="left:383px;top:427px" width="16" height="16" viewBox="0 0 16 16" opacity="0.6"><path d="M2.5 1.5h7l3 3v10h-10z" fill="#fff" stroke="#b0a070"/><path d="M5 5q-1 0-1 1v1l-1 .5 1 .5v1q0 1 1 1M8 5q1 0 1 1v1l1 .5-1 .5v1q0 1-1 1" fill="none" stroke="#6080b0" stroke-width="0.9"/><path d="M9 12h4l-1.5-1.5M13 12l-1.5 1.5" stroke="#d0a030" fill="none" stroke-width="1.2"/></svg>
<div class="a" style="left:402px;top:430px;line-height:13px;color:#7c7c7c;letter-spacing:-0.25px">Declaration</div>
<svg class="a" style="left:468px;top:428px" width="15" height="15" viewBox="0 0 15 15"><rect x="1" y="1" width="13" height="10" rx="1.5" fill="#3a6aa8"/><rect x="3" y="3" width="9" height="6" fill="#e8f0f8"/><path d="M4.5 5h5M4.5 7h3" stroke="#3a6aa8"/><path d="M5.5 11.5h4v1.5h2v1.5h-8V13h2z" fill="#3a6aa8"/></svg>
<div class="a" style="left:486px;top:430px;line-height:13px;letter-spacing:-0.54px">Console</div>
<svg class="a" style="left:532px;top:430px" width="10" height="10" viewBox="0 0 10 10"><g fill="#202020"><rect x="0" y="0" width="1" height="1"/><rect x="1" y="0" width="1" height="1"/><rect x="2" y="0" width="1" height="1"/><rect x="7" y="0" width="1" height="1"/><rect x="8" y="0" width="1" height="1"/><rect x="9" y="0" width="1" height="1"/><rect x="0" y="1" width="1" height="1"/><rect x="3" y="1" width="1" height="1"/><rect x="6" y="1" width="1" height="1"/><rect x="9" y="1" width="1" height="1"/><rect x="0" y="2" width="1" height="1"/><rect x="4" y="2" width="1" height="1"/><rect x="5" y="2" width="1" height="1"/><rect x="9" y="2" width="1" height="1"/><rect x="1" y="3" width="1" height="1"/><rect x="8" y="3" width="1" height="1"/><rect x="2" y="4" width="1" height="1"/><rect x="7" y="4" width="1" height="1"/><rect x="2" y="5" width="1" height="1"/><rect x="7" y="5" width="1" height="1"/><rect x="1" y="6" width="1" height="1"/><rect x="8" y="6" width="1" height="1"/><rect x="0" y="7" width="1" height="1"/><rect x="4" y="7" width="1" height="1"/><rect x="5" y="7" width="1" height="1"/><rect x="9" y="7" width="1" height="1"/><rect x="0" y="8" width="1" height="1"/><rect x="3" y="8" width="1" height="1"/><rect x="6" y="8" width="1" height="1"/><rect x="9" y="8" width="1" height="1"/><rect x="0" y="9" width="1" height="1"/><rect x="1" y="9" width="1" height="1"/><rect x="2" y="9" width="1" height="1"/><rect x="7" y="9" width="1" height="1"/><rect x="8" y="9" width="1" height="1"/><rect x="9" y="9" width="1" height="1"/></g></svg>
<!-- console toolbar -->
<div class="a" style="left:973px;top:430px;width:11px;height:11px;border:1px solid #a0a0a0;background:#a8a8a8;border-radius:2px;box-shadow:inset 0 0 0 1px #e0e0e0"></div>
<svg class="a" style="left:995px;top:428px" width="15" height="14" viewBox="0 0 15 14"><path d="M2.8 2.5l9.4 9M12.2 2.5l-9.4 9" stroke="#585858" stroke-width="3.6" stroke-linecap="round"/><path d="M2.8 2.5l9.4 9M12.2 2.5l-9.4 9" stroke="#8a8a8a" stroke-width="2" stroke-linecap="round"/></svg>
<svg class="a" style="left:1019px;top:427px" width="16" height="16" viewBox="0 0 16 16"><path d="M2.5 2l7 7M9.5 2l-7 7" stroke="#505050" stroke-width="3" stroke-linecap="round"/><path d="M2.5 2l7 7M9.5 2l-7 7" stroke="#f4f4f4" stroke-width="1.4" stroke-linecap="round"/><path d="M5.5 5.5l8 8.5M13.5 5.5l-8 8.5" stroke="#505050" stroke-width="3.4" stroke-linecap="round"/><path d="M5.5 5.5l8 8.5M13.5 5.5l-8 8.5" stroke="#858585" stroke-width="1.8" stroke-linecap="round"/></svg>
<div class="a" style="left:1041px;top:426px;width:1px;height:18px;background:#707070"></div>
<svg class="a" style="left:1051px;top:427px" width="16" height="16" viewBox="0 0 16 16"><path d="M1.5 0.5h7l3 3v10.5h-10z" fill="#fff" stroke="#a8a078"/><path d="M8.5 0.5v3h3" fill="#f0e8c0" stroke="#b8a868" stroke-width="0.8"/><path d="M3 3.5h4M3 5.5h6M3 7.5h6M3 9.5h6M3 11.5h5" stroke="#4a70b8"/><path d="M10 10l4.5 4.5M14.5 10L10 14.5" stroke="#707070" stroke-width="2"/></svg>
<svg class="a" style="left:1075px;top:427px" width="16" height="16" viewBox="0 0 16 16"><rect x="1.5" y="1.5" width="13" height="13" fill="#fff" stroke="#5a6a80"/><rect x="10.5" y="1.5" width="4" height="13" fill="#e4eaf2" stroke="#5a6a80"/><rect x="12" y="3" width="1" height="1" fill="#203050"/><rect x="12" y="12" width="1" height="1" fill="#203050"/><path d="M3 11V9.5q0-2.5 2.5-2.5T8 9.5V11" fill="none" stroke="#b08820" stroke-width="1.3"/><rect x="1.5" y="10.5" width="8" height="5" rx="1" fill="#e8c040" stroke="#a07810"/></svg>
<svg class="a" style="left:1099px;top:427px" width="16" height="16" viewBox="0 0 16 16"><path d="M1.5 0.5h7l3 3v10.5h-10z" fill="#fff" stroke="#a8a078"/><path d="M3 3.5h5M3 5.5h5M3 7.5h4M3 9.5h3M3 11.5h3" stroke="#4a70b8"/><path d="M13.5 4.5v6.5h-5" fill="none" stroke="#e0b040" stroke-width="2.2"/><path d="M9.5 8l-3.5 3 3.5 3z" fill="#f8d870" stroke="#d0a030" stroke-width="0.6"/></svg>
<div class="a pressed" style="left:1118px;top:424px;width:23px;height:21px"></div>
<svg class="a" style="left:1122px;top:427px" width="16" height="16" viewBox="0 0 16 16"><rect x="4.5" y="1.5" width="11" height="9" fill="#e0ecf8" stroke="#3a6aa8"/><path d="M7 4.5h6M7 7h4" stroke="#3a6aa8"/><rect x="0.5" y="6.5" width="7" height="6" fill="#e0ecf8" stroke="#3a6aa8"/><path d="M2.5 14.5h3M4 12.5v2" stroke="#3a6aa8" stroke-width="1.2"/></svg>
<div class="a pressed" style="left:1142px;top:424px;width:23px;height:21px"></div>
<svg class="a" style="left:1146px;top:427px" width="16" height="16" viewBox="0 0 16 16"><rect x="4.5" y="1.5" width="11" height="9" fill="#e0ecf8" stroke="#3a6aa8"/><path d="M6.5 3.5l3 3.5M9.5 3.5l-3 3.5" stroke="#e02020" stroke-width="1.5"/><path d="M11 4.5h3M11 7h3" stroke="#3a6aa8"/><rect x="0.5" y="6.5" width="7" height="6" fill="#e0ecf8" stroke="#3a6aa8"/><path d="M2.5 14.5h3M4 12.5v2" stroke="#3a6aa8" stroke-width="1.2"/></svg>
<div class="a" style="left:1169px;top:426px;width:1px;height:18px;background:#707070"></div>
<svg class="a" style="left:1179px;top:428px" width="16" height="15" viewBox="0 0 16 15"><rect x="0.5" y="3.5" width="13" height="11" fill="#f0f4f8" stroke="#7090b0"/><rect x="1" y="4" width="12" height="2" fill="#5a8ac0"/><path d="M6 11l4-4" stroke="#208040" stroke-width="1.5"/><circle cx="11.5" cy="4" r="3" fill="#30a050"/></svg>
<svg class="a" style="left:1203px;top:428px" width="15" height="14" viewBox="0 0 15 14"><rect x="1" y="0.5" width="13" height="10" rx="1.5" fill="#8a8a8a"/><rect x="3" y="2.5" width="9" height="6" fill="#e8e8e8"/><path d="M4.5 4.5h5M4.5 6.5h3" stroke="#8a8a8a"/><path d="M5.5 11h4v1.5h2V14h-8v-1.5h2z" fill="#8a8a8a"/></svg>
<svg class="a" style="left:1225px;top:434px" width="7" height="4" viewBox="0 0 7 4"><path d="M1 0h5L3.5 3z" fill="#a0a0a0"/></svg>
<svg class="a" style="left:1239px;top:427px" width="17" height="16" viewBox="0 0 17 16"><rect x="0.5" y="3.5" width="13" height="11" fill="#fffbe8" stroke="#a09870"/><rect x="1" y="4" width="12" height="2" fill="#5a8ac0"/><path d="M12.5 0.5l1.3 2.2 2.2 1.3-2.2 1.3-1.3 2.2-1.3-2.2L9 4l2.2-1.3z" fill="#fff0a0" stroke="#d0a020" stroke-width="0.8"/></svg>
<svg class="a" style="left:1262px;top:434px" width="7" height="4" viewBox="0 0 7 4"><path d="M1 0h5L3.5 3z" fill="#000"/></svg>
<div class="a" style="left:1278px;top:430px;width:10px;height:4px;border:1px solid #333;background:#fff"></div>
<div class="a" style="left:1301px;top:430px;width:10px;height:10px;border:1px solid #333;background:#fff;box-shadow:inset 0 1px 0 #fff,inset 0 2px 0 #333"></div>
<div class="a" style="left:240px;top:451px;line-height:13px;letter-spacing:0.03px">&lt;terminated&gt; Formulario [Java Application] C:\Program Files\Java\jre1.8.0_181\bin\javaw.exe (27 de set de 2018 20:14:00)</div>
<div class="a" style="left:237px;top:463px;width:1085px;height:1px;background:#808080"></div>
<div class="a code" style="left:241px;top:467px"><span class="red">Exception in thread "main" </span><span class="lnk">java.lang.NullPointerException</span>
<span class="red">        at java.awt.Container.addImpl(Unknown Source)
        at java.awt.Container.add(Unknown Source)
        at javax.swing.JFrame.addImpl(Unknown Source)
        at java.awt.Container.add(Unknown Source)
        at view.Tela.&lt;init&gt;(</span><span class="lnk">Tela.java:99</span><span class="red">)
        at view.Formulario.main(</span><span class="lnk">Formulario.java:4</span><span class="red">)</span></div>
<!-- console scrollbars -->
<div class="a hatch" style="left:1307px;top:481px;width:15px;height:180px"></div>
<div class="a btn" style="left:1307px;top:465px"><svg width="14" height="14" viewBox="0 0 14 14"><path d="M4 10h8" stroke="#fff"/><path d="M3 9.5h8L7 5.5z" fill="#808080"/></svg></div>
<div class="a btn" style="left:1307px;top:660px"><svg width="14" height="14" viewBox="0 0 14 14"><path d="M8 10.5l4-4.5" stroke="#fff"/><path d="M3 5h8L7 9z" fill="#808080"/></svg></div>
<div class="a hatch" style="left:255px;top:676px;width:1036px;height:16px"></div>
<div class="a btn" style="left:239px;top:676px"><svg width="14" height="14" viewBox="0 0 14 14"><path d="M9.5 4v8" stroke="#fff"/><path d="M9 3v8L5 7z" fill="#808080"/></svg></div>
<div class="a btn" style="left:1291px;top:676px"><svg width="14" height="14" viewBox="0 0 14 14"><path d="M6 11.5l4-4" stroke="#fff"/><path d="M5 3v8L9 7z" fill="#808080"/></svg></div>
<div class="a" style="left:1307px;top:676px;width:15px;height:16px;background:#d4d0c8"></div>
<div id="status" class="a"></div>
<div class="a" style="left:827px;top:696px;width:1px;height:6px;background:#808080"></div>
<div class="a" style="left:916px;top:696px;width:1px;height:6px;background:#808080"></div>
<div class="a" style="left:1000px;top:696px;width:1px;height:6px;background:#808080"></div>
<div class="a" style="left:861px;top:699px;width:1px;height:3px;background:#202020"></div>
<div class="a" style="left:867px;top:699px;width:1px;height:3px;background:#202020"></div>
<div class="a" style="left:1083px;top:700px;width:1px;height:2px;background:#404040"></div>
</body></html>
